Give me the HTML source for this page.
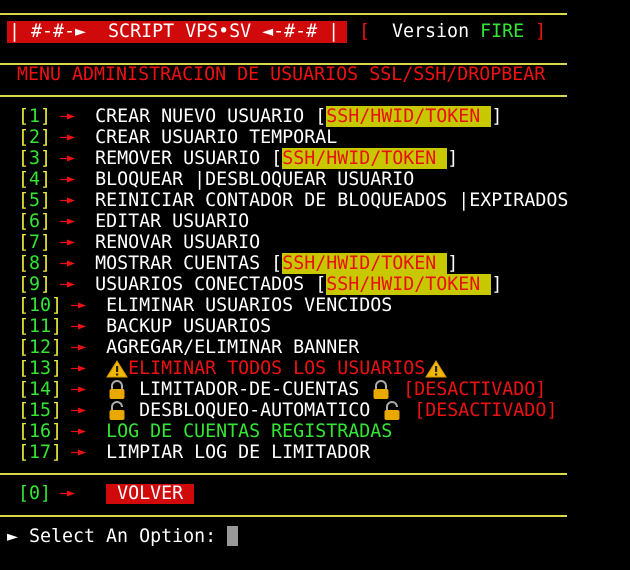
<!DOCTYPE html>
<html><head><meta charset="utf-8"><style>
html,body{margin:0;padding:0;background:#000;width:630px;height:570px;overflow:hidden}
body{position:relative;font-family:"DejaVu Sans Mono","Liberation Mono",monospace;font-size:18.3px;color:#fff}
.l{position:absolute;left:0;width:567px;height:2px;background:#d8d84a}
.r{position:absolute;white-space:pre;line-height:21px;height:21px}
.y{color:#ecec3a}.g{color:#33e633}.rd{color:#ee1111}.w{color:#fff}
.hl{background:#c8c800;color:#e81010}
.ar{display:inline-block;width:11px;height:21px;vertical-align:top;position:relative}
.ar svg{position:absolute;left:-2px;top:6px}
.ic{display:inline-block;width:22px;height:21px;vertical-align:top;position:relative}
</style></head><body>
<div class="l" style="top:13px"></div>
<div class="r" style="top:21px;left:7px;width:340px;height:22px;background:#d00a0a"></div>
<div class="r" style="top:21px;left:9px;line-height:22px">| #-#-►  SCRIPT VPS•SV ◄-#-# |</div>
<div class="r" style="top:21px;left:359px;line-height:22px"><span class="rd">[</span>  Version <span class="g">FIRE</span> <span class="rd">]</span></div>
<div class="l" style="top:63px"></div>
<div class="r rd" style="top:64px;left:17px">MENU ADMINISTRACION DE USUARIOS SSL/SSH/DROPBEAR</div>
<div class="l" style="top:95px"></div>

<div class="r" style="top:106px;left:18px"><span class="y">[</span><span class="g">1</span><span class="y">]</span> <span class="ar"><svg width="16" height="9"><path d="M0 4.5H9" stroke="#e81010" stroke-width="1.2"/><path d="M7 1.5L15 4.5L7 7.5Z" fill="#e81010"/></svg></span>  CREAR NUEVO USUARIO [<span class="hl">SSH/HWID/TOKEN </span>]</div>
<div class="r" style="top:127px;left:18px"><span class="y">[</span><span class="g">2</span><span class="y">]</span> <span class="ar"><svg width="16" height="9"><path d="M0 4.5H9" stroke="#e81010" stroke-width="1.2"/><path d="M7 1.5L15 4.5L7 7.5Z" fill="#e81010"/></svg></span>  CREAR USUARIO TEMPORAL</div>
<div class="r" style="top:148px;left:18px"><span class="y">[</span><span class="g">3</span><span class="y">]</span> <span class="ar"><svg width="16" height="9"><path d="M0 4.5H9" stroke="#e81010" stroke-width="1.2"/><path d="M7 1.5L15 4.5L7 7.5Z" fill="#e81010"/></svg></span>  REMOVER USUARIO [<span class="hl">SSH/HWID/TOKEN </span>]</div>
<div class="r" style="top:169px;left:18px"><span class="y">[</span><span class="g">4</span><span class="y">]</span> <span class="ar"><svg width="16" height="9"><path d="M0 4.5H9" stroke="#e81010" stroke-width="1.2"/><path d="M7 1.5L15 4.5L7 7.5Z" fill="#e81010"/></svg></span>  BLOQUEAR |DESBLOQUEAR USUARIO</div>
<div class="r" style="top:190px;left:18px"><span class="y">[</span><span class="g">5</span><span class="y">]</span> <span class="ar"><svg width="16" height="9"><path d="M0 4.5H9" stroke="#e81010" stroke-width="1.2"/><path d="M7 1.5L15 4.5L7 7.5Z" fill="#e81010"/></svg></span>  REINICIAR CONTADOR DE BLOQUEADOS |EXPIRADOS</div>
<div class="r" style="top:211px;left:18px"><span class="y">[</span><span class="g">6</span><span class="y">]</span> <span class="ar"><svg width="16" height="9"><path d="M0 4.5H9" stroke="#e81010" stroke-width="1.2"/><path d="M7 1.5L15 4.5L7 7.5Z" fill="#e81010"/></svg></span>  EDITAR USUARIO</div>
<div class="r" style="top:232px;left:18px"><span class="y">[</span><span class="g">7</span><span class="y">]</span> <span class="ar"><svg width="16" height="9"><path d="M0 4.5H9" stroke="#e81010" stroke-width="1.2"/><path d="M7 1.5L15 4.5L7 7.5Z" fill="#e81010"/></svg></span>  RENOVAR USUARIO</div>
<div class="r" style="top:253px;left:18px"><span class="y">[</span><span class="g">8</span><span class="y">]</span> <span class="ar"><svg width="16" height="9"><path d="M0 4.5H9" stroke="#e81010" stroke-width="1.2"/><path d="M7 1.5L15 4.5L7 7.5Z" fill="#e81010"/></svg></span>  MOSTRAR CUENTAS [<span class="hl">SSH/HWID/TOKEN </span>]</div>
<div class="r" style="top:274px;left:18px"><span class="y">[</span><span class="g">9</span><span class="y">]</span> <span class="ar"><svg width="16" height="9"><path d="M0 4.5H9" stroke="#e81010" stroke-width="1.2"/><path d="M7 1.5L15 4.5L7 7.5Z" fill="#e81010"/></svg></span>  USUARIOS CONECTADOS [<span class="hl">SSH/HWID/TOKEN </span>]</div>
<div class="r" style="top:295px;left:18px"><span class="y">[</span><span class="g">10</span><span class="y">]</span> <span class="ar"><svg width="16" height="9"><path d="M0 4.5H9" stroke="#e81010" stroke-width="1.2"/><path d="M7 1.5L15 4.5L7 7.5Z" fill="#e81010"/></svg></span>  ELIMINAR USUARIOS VENCIDOS</div>
<div class="r" style="top:316px;left:18px"><span class="y">[</span><span class="g">11</span><span class="y">]</span> <span class="ar"><svg width="16" height="9"><path d="M0 4.5H9" stroke="#e81010" stroke-width="1.2"/><path d="M7 1.5L15 4.5L7 7.5Z" fill="#e81010"/></svg></span>  BACKUP USUARIOS</div>
<div class="r" style="top:337px;left:18px"><span class="y">[</span><span class="g">12</span><span class="y">]</span> <span class="ar"><svg width="16" height="9"><path d="M0 4.5H9" stroke="#e81010" stroke-width="1.2"/><path d="M7 1.5L15 4.5L7 7.5Z" fill="#e81010"/></svg></span>  AGREGAR/ELIMINAR BANNER</div>
<div class="r" style="top:358px;left:18px"><span class="y">[</span><span class="g">13</span><span class="y">]</span> <span class="ar"><svg width="16" height="9"><path d="M0 4.5H9" stroke="#e81010" stroke-width="1.2"/><path d="M7 1.5L15 4.5L7 7.5Z" fill="#e81010"/></svg></span>  <span class="ic"><svg width="22" height="21"><path d="M11 3L21 19H1Z" fill="#f2b705" stroke="#d89a00" stroke-width="1"/><rect x="10" y="8" width="2.2" height="6" fill="#222"/><rect x="10" y="15.5" width="2.2" height="2" fill="#222"/></svg></span><span class="rd">ELIMINAR TODOS LOS USUARIOS</span><span class="ic"><svg width="22" height="21"><path d="M11 3L21 19H1Z" fill="#f2b705" stroke="#d89a00" stroke-width="1"/><rect x="10" y="8" width="2.2" height="6" fill="#222"/><rect x="10" y="15.5" width="2.2" height="2" fill="#222"/></svg></span></div>
<div class="r" style="top:379px;left:18px"><span class="y">[</span><span class="g">14</span><span class="y">]</span> <span class="ar"><svg width="16" height="9"><path d="M0 4.5H9" stroke="#e81010" stroke-width="1.2"/><path d="M7 1.5L15 4.5L7 7.5Z" fill="#e81010"/></svg></span>  <span class="ic"><svg width="22" height="21"><path d="M6 10V7a5 5 0 0 1 10 0v3" fill="none" stroke="#aaa" stroke-width="2"/><rect x="3.5" y="10" width="15" height="10" rx="2" fill="#e8a800"/></svg></span> LIMITADOR-DE-CUENTAS <span class="ic"><svg width="22" height="21"><path d="M6 10V7a5 5 0 0 1 10 0v3" fill="none" stroke="#aaa" stroke-width="2"/><rect x="3.5" y="10" width="15" height="10" rx="2" fill="#e8a800"/></svg></span> <span class="rd">[DESACTIVADO]</span></div>
<div class="r" style="top:400px;left:18px"><span class="y">[</span><span class="g">15</span><span class="y">]</span> <span class="ar"><svg width="16" height="9"><path d="M0 4.5H9" stroke="#e81010" stroke-width="1.2"/><path d="M7 1.5L15 4.5L7 7.5Z" fill="#e81010"/></svg></span>  <span class="ic"><svg width="22" height="21"><path d="M6 10V7a5 5 0 0 1 10 0" fill="none" stroke="#aaa" stroke-width="2"/><rect x="3.5" y="10" width="15" height="10" rx="2" fill="#e8a800"/></svg></span> DESBLOQUEO-AUTOMATICO <span class="ic"><svg width="22" height="21"><path d="M6 10V7a5 5 0 0 1 10 0" fill="none" stroke="#aaa" stroke-width="2"/><rect x="3.5" y="10" width="15" height="10" rx="2" fill="#e8a800"/></svg></span> <span class="rd">[DESACTIVADO]</span></div>
<div class="r" style="top:421px;left:18px"><span class="y">[</span><span class="g">16</span><span class="y">]</span> <span class="ar"><svg width="16" height="9"><path d="M0 4.5H9" stroke="#e81010" stroke-width="1.2"/><path d="M7 1.5L15 4.5L7 7.5Z" fill="#e81010"/></svg></span>  <span class="g">LOG DE CUENTAS REGISTRADAS</span></div>
<div class="r" style="top:442px;left:18px"><span class="y">[</span><span class="g">17</span><span class="y">]</span> <span class="ar"><svg width="16" height="9"><path d="M0 4.5H9" stroke="#e81010" stroke-width="1.2"/><path d="M7 1.5L15 4.5L7 7.5Z" fill="#e81010"/></svg></span>  LIMPIAR LOG DE LIMITADOR</div>

<div class="l" style="top:473px"></div>
<div class="r" style="top:484px;left:106px;width:88px;height:20px;background:#d00a0a"></div>
<div class="r g" style="top:483px;left:18px">[0] <span class="ar"><svg width="16" height="9"><path d="M0 4.5H9" stroke="#e81010" stroke-width="1.2"/><path d="M7 1.5L15 4.5L7 7.5Z" fill="#e81010"/></svg></span>    <span class="w">VOLVER</span></div>
<div class="l" style="top:515px"></div>
<div class="r" style="top:526px;left:7px">► Select An Option: </div>
<div class="r" style="top:526px;left:227px;width:11px;height:20px;background:#999"></div>
</body></html>
